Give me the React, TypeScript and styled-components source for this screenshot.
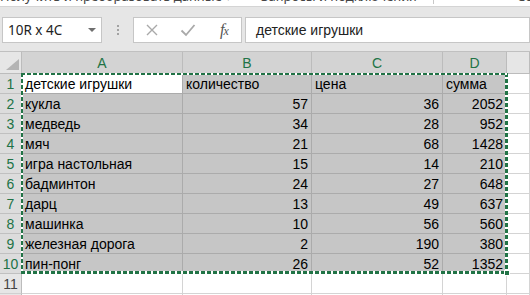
import styled, { createGlobalStyle } from "styled-components";

const GlobalStyle = createGlobalStyle`
  html, body {
    margin: 0;
    padding: 0;
    background: #ffffff;
    overflow: hidden;
  }
  * { box-sizing: border-box; }
`;

interface Row {
  name: string;
  qty: number | string;
  price: number | string;
  sum: number | string;
}

const rows: Row[] = [
  { name: "детские игрушки", qty: "количество", price: "цена", sum: "сумма" },
  { name: "кукла", qty: 57, price: 36, sum: 2052 },
  { name: "медведь", qty: 34, price: 28, sum: 952 },
  { name: "мяч", qty: 21, price: 68, sum: 1428 },
  { name: "игра настольная", qty: 15, price: 14, sum: 210 },
  { name: "бадминтон", qty: 24, price: 27, sum: 648 },
  { name: "дарц", qty: 13, price: 49, sum: 637 },
  { name: "машинка", qty: 10, price: 56, sum: 560 },
  { name: "железная дорога", qty: 2, price: 190, sum: 380 },
  { name: "пин-понг", qty: 26, price: 52, sum: 1352 },
];

const columns = ["A", "B", "C", "D", ""];

const Page = styled.div`
  width: 530px;
  height: 295px;
  overflow: hidden;
  display: flex;
  flex-direction: column;
  background: #ffffff;
`;

// only the bottom edge of the ribbon group labels is visible in the window
const RibbonStrip = styled.div`
  height: 7px;
  flex: none;
  overflow: hidden;
  border-bottom: 1px solid #d4d4d4;
  background: #ffffff;
`;

const RibbonLabels = styled.div`
  display: flex;
  align-items: flex-end;
  height: 16px;
  margin-top: -12px;
  font-family: "Noto Sans", "Open Sans", sans-serif;
  font-size: 13px;
  line-height: 16px;
  color: #444444;
  white-space: nowrap;
`;

const GroupLabel = styled.span<{ $width: number }>`
  flex: none;
  width: ${(p) => p.$width}px;
  padding-left: ${(p) => (p.$width > 200 ? 0 : 14)}px;
`;

const GroupSep = styled.span`
  flex: none;
  width: 1px;
  height: 16px;
  background: #c8c8c8;
  margin-right: 83px;
`;

const Toolbar = styled.div`
  height: 44px;
  flex: none;
  display: flex;
  align-items: flex-start;
  padding: 10px 0 0 2px;
  background: #e6e6e6;
`;

const Box = styled.div<{ $width?: number }>`
  height: 26px;
  display: flex;
  align-items: center;
  background: #ffffff;
  border: 1px solid #c6c6c6;
  ${(p) => (p.$width ? `width: ${p.$width}px; flex: none;` : "flex: 1;")}
`;

const NameText = styled.span`
  flex: 1;
  padding-left: 5px;
  font-family: "Noto Sans", "Open Sans", sans-serif;
  font-size: 13.5px;
  color: #222222;
`;

const Caret = styled.span`
  width: 0;
  height: 0;
  margin-right: 5px;
  border-left: 4px solid transparent;
  border-right: 4px solid transparent;
  border-top: 4px solid #6f6f6f;
`;

const Grip = styled.div`
  width: 31px;
  flex: none;
  height: 26px;
  display: flex;
  flex-direction: column;
  align-items: center;
  justify-content: center;
  gap: 2px;
`;

const Dot = styled.span`
  width: 2px;
  height: 2px;
  background: #a2a2a2;
`;

const FxButtons = styled(Box)`
  gap: 12px;
  padding-left: 6px;
  margin-right: 3px;
`;

const IconSlot = styled.span`
  width: 24px;
  display: flex;
  justify-content: center;
  align-items: center;
`;

const Fx = styled.span`
  font-family: "Liberation Serif", "DejaVu Serif", serif;
  font-style: italic;
  font-size: 16px;
  color: #555555;
  letter-spacing: -1px;
  small {
    font-size: 12px;
  }
`;

const FormulaText = styled.span`
  padding-left: 10px;
  font-family: "Liberation Sans", Arial, sans-serif;
  font-size: 14px;
  color: #222222;
`;

const Sheet = styled.div`
  position: relative;
  flex: 1;
  display: grid;
  grid-template-columns: 22px 161px 129px 131px 64px 1fr;
  grid-template-rows: 22px repeat(11, 20px) 1fr;
  border-top: 1px solid #c0c0c0;
  font-family: "Liberation Sans", Arial, sans-serif;
  font-size: 14px;
`;

const Corner = styled.div`
  background: #e6e6e6;
  border-right: 1px solid #bcbcbc;
  border-bottom: 1px solid #bcbcbc;
  display: flex;
  align-items: flex-end;
  justify-content: flex-end;
  padding: 0 2px 3px 0;
`;

const ColHead = styled.div<{ $selected: boolean }>`
  display: flex;
  align-items: center;
  justify-content: center;
  background: ${(p) => (p.$selected ? "#d3d3d3" : "#e6e6e6")};
  color: ${(p) => (p.$selected ? "#217346" : "#444444")};
  border-right: 1px solid #bcbcbc;
  border-bottom: 1px solid ${(p) => (p.$selected ? "#9a9a9a" : "#bcbcbc")};
  font-size: 14px;
`;

const RowHead = styled.div<{ $selected: boolean }>`
  display: flex;
  align-items: center;
  justify-content: center;
  background: ${(p) => (p.$selected ? "#dcdcdc" : "#e6e6e6")};
  color: ${(p) => (p.$selected ? "#217346" : "#444444")};
  border-right: 1px solid #bcbcbc;
  border-bottom: 1px solid ${(p) => (p.$selected ? "#c0c0c0" : "#d0d0d0")};
  font-size: 14px;
  padding-top: 1px;
`;

const Cell = styled.div<{ $selected: boolean; $active?: boolean; $right?: boolean }>`
  display: flex;
  align-items: center;
  justify-content: ${(p) => (p.$right ? "flex-end" : "flex-start")};
  padding: 1px 3px 0 3px;
  white-space: nowrap;
  overflow: hidden;
  color: #000000;
  background: ${(p) => (p.$active ? "#ffffff" : p.$selected ? "#c6c6c6" : "#ffffff")};
  border-right: 1px solid ${(p) => (p.$selected ? "#ababab" : "#d4d4d4")};
  border-bottom: 1px solid ${(p) => (p.$selected ? "#ababab" : "#d4d4d4")};
`;

const dashH = "repeating-linear-gradient(90deg, #217346 0 4px, #ffffff 4px 6px)";
const dashV = "repeating-linear-gradient(180deg, #217346 0 4px, #ffffff 4px 6px)";

// copy marquee around A1:D10
const Marquee = styled.div`
  position: absolute;
  left: 21px;
  top: 21px;
  width: 487px;
  height: 201px;
  pointer-events: none;
  background:
    ${dashH} top left / 100% 2px no-repeat,
    ${dashH} bottom left / 100% 3px no-repeat,
    ${dashV} top left / 2px 100% no-repeat,
    ${dashV} top right / 3px 100% no-repeat;
`;

const FillHandle = styled.div`
  position: absolute;
  right: -2px;
  bottom: -2px;
  width: 6px;
  height: 6px;
  background: #217346;
  border: 1px solid #ffffff;
`;

const XIcon = () => (
  <svg width="14" height="14" viewBox="0 0 14 14">
    <path d="M2 2 L12 12 M12 2 L2 12" stroke="#a9a9a9" strokeWidth="1.4" fill="none" />
  </svg>
);

const CheckIcon = () => (
  <svg width="16" height="14" viewBox="0 0 16 14">
    <path d="M1.5 7.5 L6 12 L14.5 2" stroke="#a9a9a9" strokeWidth="1.8" fill="none" />
  </svg>
);

const SelectAll = () => (
  <svg width="13" height="11" viewBox="0 0 13 11">
    <polygon points="13,0 13,11 0,11" fill="#b4b4b4" />
  </svg>
);

export default function App() {
  return (
    <Page>
      <GlobalStyle />
      <RibbonStrip>
        <RibbonLabels>
          <GroupLabel $width={247}>Получить и преобразовать данные ▾</GroupLabel>
          <GroupLabel $width={186}>Запросы и подключения</GroupLabel>
          <GroupSep />
          <span>Сортировка и фильтр</span>
        </RibbonLabels>
      </RibbonStrip>

      <Toolbar>
        <Box $width={100}>
          <NameText>10R x 4C</NameText>
          <Caret />
        </Box>
        <Grip>
          <Dot />
          <Dot />
          <Dot />
        </Grip>
        <FxButtons $width={109}>
          <IconSlot>
            <XIcon />
          </IconSlot>
          <IconSlot>
            <CheckIcon />
          </IconSlot>
          <IconSlot>
            <Fx>
              f<small>x</small>
            </Fx>
          </IconSlot>
        </FxButtons>
        <Box>
          <FormulaText>детские игрушки</FormulaText>
        </Box>
      </Toolbar>

      <Sheet>
        <Corner>
          <SelectAll />
        </Corner>
        {columns.map((c, i) => (
          <ColHead key={i} $selected={c !== ""}>
            {c}
          </ColHead>
        ))}

        {rows.map((r, i) => (
          <Row key={i} index={i} row={r} />
        ))}

        <RowHead $selected={false}>11</RowHead>
        {columns.map((_, i) => (
          <Cell key={i} $selected={false} />
        ))}
        <RowHead $selected={false} />
        {columns.map((_, i) => (
          <Cell key={i} $selected={false} />
        ))}

        <Marquee>
          <FillHandle />
        </Marquee>
      </Sheet>
    </Page>
  );
}

const Row = ({ index, row }: { index: number; row: Row }) => {
  const isNum = typeof row.qty === "number";
  return (
    <>
      <RowHead $selected>{index + 1}</RowHead>
      <Cell $selected $active={index === 0}>
        {row.name}
      </Cell>
      <Cell $selected $right={isNum}>
        {row.qty}
      </Cell>
      <Cell $selected $right={isNum}>
        {row.price}
      </Cell>
      <Cell $selected $right={isNum}>
        {row.sum}
      </Cell>
      <Cell $selected={false} />
    </>
  );
};
